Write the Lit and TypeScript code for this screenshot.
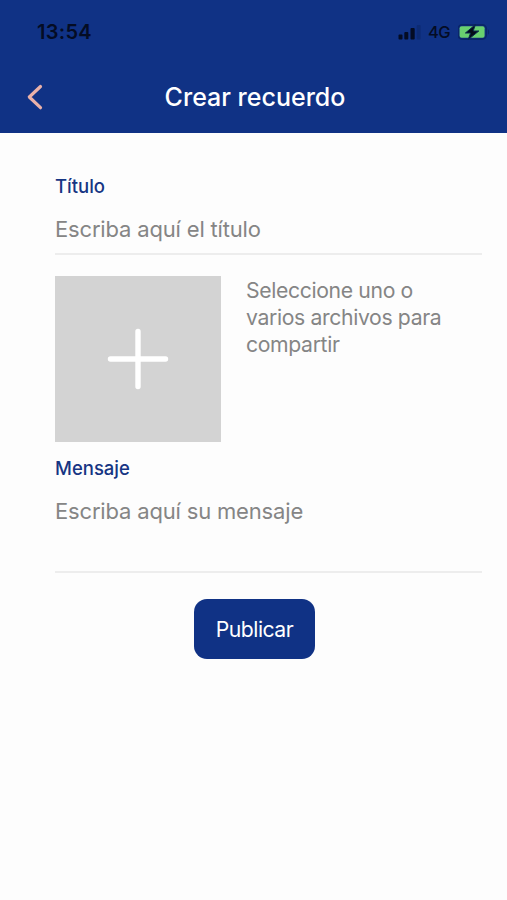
import { LitElement, html, css } from "lit";
import { customElement } from "lit/decorators.js";

@customElement("status-bar")
class StatusBar extends LitElement {
  static styles = css`
    :host { display: flex; justify-content: space-between; height: 64px; padding: 0 17px 0 37px; align-items: center; box-sizing: border-box; color: #040c24; }
    .time { font-size: 20px; font-weight: 600; letter-spacing: 0.3px; line-height: 24px; }
    .icons { display: flex; align-items: center; }
    .net { font-size: 16.5px; font-weight: 500; line-height: 20px; letter-spacing: -0.6px; margin: 0 8px 0 7px; }
    svg { display: block; }
  `;
  render() {
    return html`
      <span class="time">13:54</span>
      <div class="icons">
        <svg width="23" height="16" viewBox="0 0 23 16">
          <g fill="#040c24">
            <rect x="0.5" y="10.5" width="4" height="5" rx="1" />
            <rect x="6.3" y="8" width="4" height="7.5" rx="1" />
            <rect x="12.5" y="4" width="4.2" height="11.5" rx="1" />
          </g>
          <rect x="18.8" y="1" width="3.8" height="14.5" rx="1" fill="#0d2b74" />
        </svg>
        <span class="net">4G</span>
        <svg width="32" height="18" viewBox="0 0 32 18">
          <rect x="0.1" y="1.9" width="28.2" height="14.2" rx="4" fill="none" stroke="#0a2668" stroke-width="1.6" />
          <path d="M30 6.5v5c1.6-.6 1.6-4.4 0-5z" fill="#0a2668" />
          <rect x="1.6" y="3.2" width="25" height="11.6" rx="2" fill="#69d16f" />
          <path d="M17.4 1.6 7.4 10h5.2l-2.4 6.6L20.8 8h-5.6z" fill="#040c18" stroke="#0a2a50" stroke-width="1" stroke-linejoin="round" />
        </svg>
      </div>
    `;
  }
}

@customElement("form-field")
class FormField extends LitElement {
  static properties = { label: {}, hint: {} };
  declare label: string;
  declare hint: string;
  static styles = css`
    :host { display: flex; flex-direction: column; box-sizing: border-box; border-bottom: 2px solid #ededed; }
    .label { font-size: 18.5px; font-weight: 500; line-height: 24px; color: #163583; }
    .hint { font-size: 22px; letter-spacing: -0.17px; line-height: 28px; margin-top: 17px; color: #858585; white-space: nowrap; }
  `;
  render() {
    return html`<span class="label">${this.label}</span><span class="hint">${this.hint}</span>`;
  }
}

@customElement("app-root")
class AppRoot extends LitElement {
  static styles = css`
    :host { display: flex; flex-direction: column; height: 900px; background: #fdfdfd; font-family: Inter, "Liberation Sans", sans-serif; }
    header { height: 133px; background: #103285; }
    .bar { display: grid; grid-template-columns: 82px 1fr 79px; align-items: center; height: 66px; }
    .back { display: block; margin-left: 25px; }
    h1 { margin: 0; color: #fff; font-size: 25px; font-weight: 500; line-height: 30px; text-align: center; white-space: nowrap; }
    main { display: flex; flex-direction: column; padding: 41px 25px 0 55px; }
    .title { height: 81px; }
    .files { display: flex; gap: 25px; margin: 21px 0 14px; }
    .add { display: block; width: 166px; height: 166px; background: #d3d3d3; }
    p { margin: 1px 0 0; width: 215px; font-size: 21.2px; letter-spacing: -0.36px; line-height: 27px; color: #858585; }
    .message { height: 117px; }
    .action { display: flex; justify-content: center; margin: 26px 28px 0 0; }
    button { width: 121px; height: 60px; padding: 0; border: 0; border-radius: 13px; background: #103285; color: #fff; font: 400 21.2px/28px Inter, "Liberation Sans", sans-serif; letter-spacing: -0.5px; }
  `;
  render() {
    return html`
      <header>
        <status-bar></status-bar>
        <div class="bar">
          <svg class="back" width="20" height="28" viewBox="0 0 20 28">
            <path d="M15.5 3.5 4.3 14l11.2 10.7" fill="none" stroke="#eab1a9" stroke-width="3.2" stroke-linecap="round" stroke-linejoin="round" />
          </svg>
          <h1>Crear recuerdo</h1>
        </div>
      </header>
      <main>
        <form-field class="title" label="Título" hint="Escriba aquí el título"></form-field>
        <section class="files">
          <svg class="add" viewBox="0 0 166 166">
            <path d="M55.5 83h55M83 55.5v55" stroke="#fff" stroke-width="5.4" stroke-linecap="round" />
          </svg>
          <p>Seleccione uno o varios archivos para compartir</p>
        </section>
        <form-field class="message" label="Mensaje" hint="Escriba aquí su mensaje"></form-field>
        <div class="action"><button>Publicar</button></div>
      </main>
    `;
  }
}
